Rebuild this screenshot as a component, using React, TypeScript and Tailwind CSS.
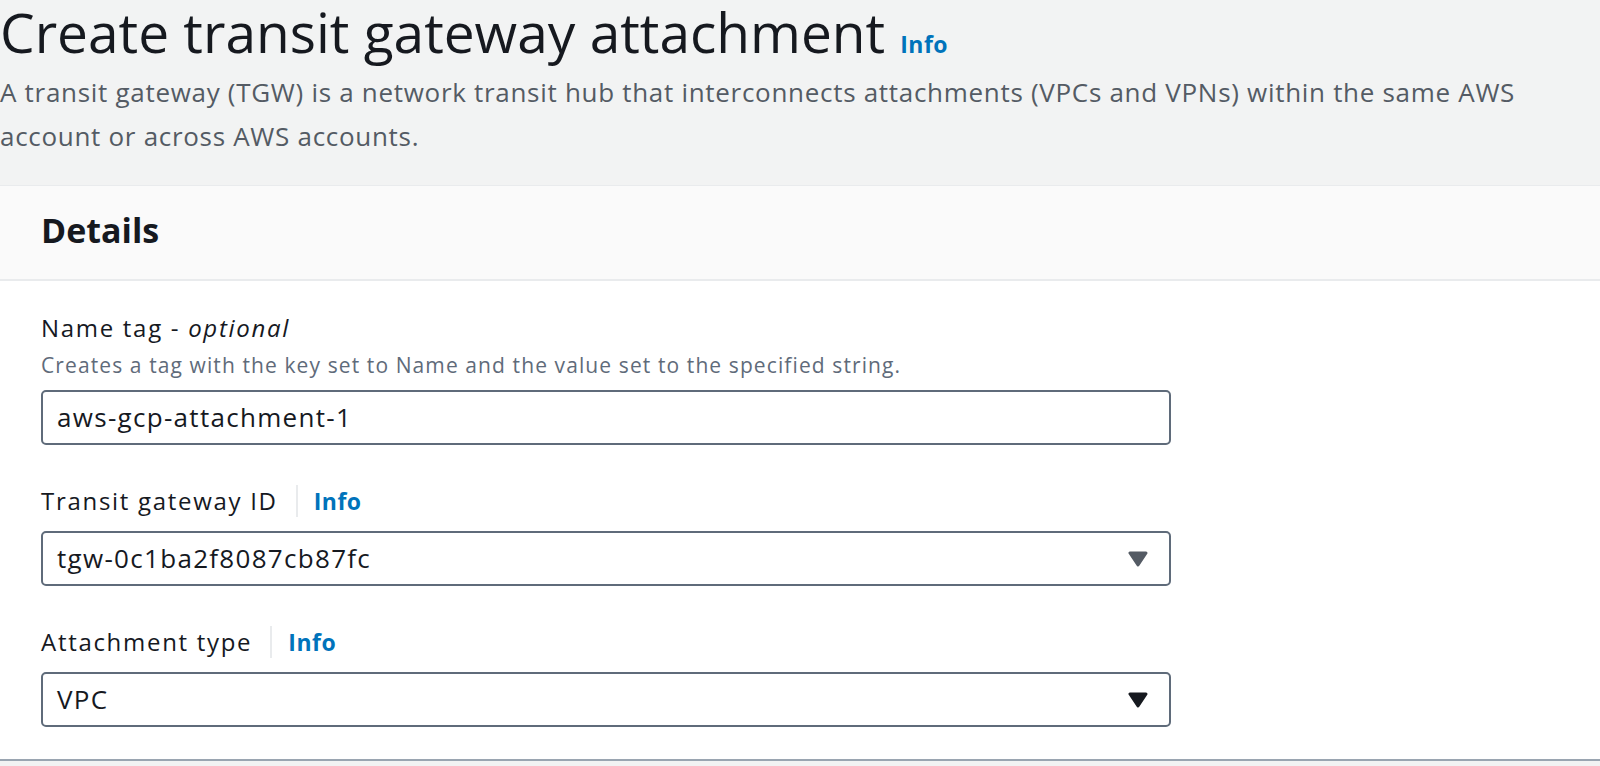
import React from "react";

function Caret({ color }: { color: string }) {
  return (
    <svg width="20" height="16" viewBox="0 0 20 16" className="shrink-0">
      <path d="M2 2 L18 2 L10 14 Z" fill={color} stroke={color} strokeWidth="3" strokeLinejoin="round" />
    </svg>
  );
}

function InfoLink({ className = "" }: { className?: string }) {
  return <span className={`font-bold text-[#0073bb] tracking-[0.5px] ${className}`}>Info</span>;
}

function FieldLabel({ text }: { text: string }) {
  return (
    <div className="flex items-center h-[32px] text-[24px] leading-[32px] tracking-[1.7px] text-[#16191f]">
      <span>{text}</span>
      <span className="ml-[18px] mr-[16px] h-[32px] w-[2px] bg-[#e9ebed]" />
      <InfoLink className="text-[23px]" />
    </div>
  );
}

function SelectBox({ value, caret }: { value: string; caret: string }) {
  return (
    <div className="mt-[14px] flex h-[55px] w-[1130px] items-center justify-between rounded-[5px] border-2 border-[#5f6b7a] bg-white pl-[14px] pr-[21px]">
      <span className="text-[26px] tracking-[1.3px] text-[#16191f]">{value}</span>
      <Caret color={caret} />
    </div>
  );
}

export default function App() {
  return (
    <div className="min-h-screen bg-[#f2f3f3] font-['Open_Sans',sans-serif]">
      <header className="pb-[27px]">
        <div className="flex items-baseline">
          <h1 className="text-[55px] leading-[64px] font-normal text-[#16191f]">
            Create transit gateway attachment
          </h1>
          <InfoLink className="ml-[15px] text-[23px]" />
        </div>
        <p className="mt-[6px] max-w-[1565px] text-[26px] leading-[44px] tracking-[0.7px] text-[#545b64]">
          A transit gateway (TGW) is a network transit hub that interconnects attachments (VPCs and VPNs) within the same AWS
          account or across AWS accounts.
        </p>
      </header>

      <section className="border-t border-[#e9ebed] border-b-2 border-b-[#9aa5b1] bg-white">
        <div className="h-[93px] bg-[#fafafa] px-[41px] pt-[24px]">
          <h2 className="text-[34px] leading-[40px] font-bold text-[#16191f]">Details</h2>
        </div>
        <div className="border-t-2 border-[#e9ebed] px-[41px] pt-[31px] pb-[32px]">
          <div className="text-[24px] leading-[32px] tracking-[1.7px] text-[#16191f]">
            Name tag - <i>optional</i>
          </div>
          <div className="mt-[7px] text-[21px] leading-[28px] tracking-[1.1px] text-[#5f6b7a]">
            Creates a tag with the key set to Name and the value set to the specified string.
          </div>
          <div className="mt-[11px] flex h-[55px] w-[1130px] items-center rounded-[5px] border-2 border-[#5f6b7a] bg-white pl-[14px]">
            <span className="text-[26px] tracking-[1.3px] text-[#16191f]">aws-gcp-attachment-1</span>
          </div>

          <div className="mt-[40px]">
            <FieldLabel text="Transit gateway ID" />
          </div>
          <SelectBox value="tgw-0c1ba2f8087cb87fc" caret="#545b64" />

          <div className="mt-[40px]">
            <FieldLabel text="Attachment type" />
          </div>
          <SelectBox value="VPC" caret="#16191f" />
        </div>
      </section>
    </div>
  );
}
